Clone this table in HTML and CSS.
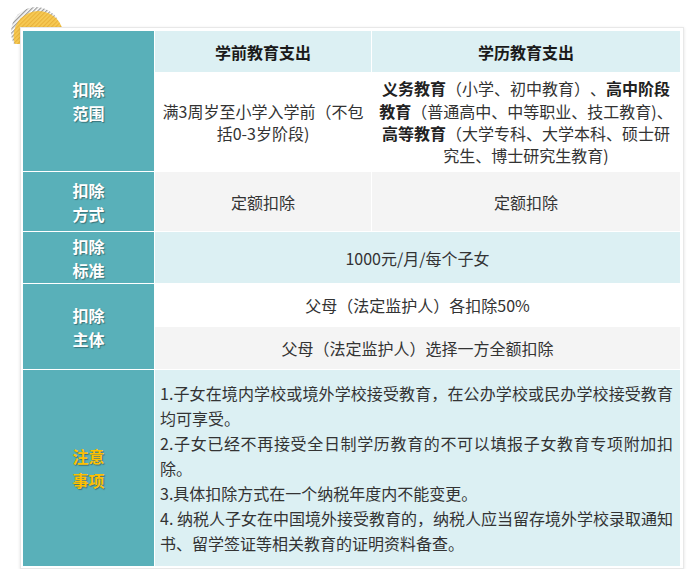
FILE: index.html
```html
<!DOCTYPE html>
<html lang="zh-CN">
<head>
<meta charset="utf-8">
<title>子女教育专项附加扣除</title>
<link rel="stylesheet" href="styles.css">
</head>
<body>
<div class="page">
  <svg class="deco" width="64" height="40" viewBox="0 0 64 40" aria-hidden="true">
    <defs>
      <pattern id="hatchGrey" width="3" height="3" patternUnits="userSpaceOnUse" patternTransform="rotate(45)">
        <rect width="3" height="3" fill="#ffffff"/>
        <rect width="1.3" height="3" fill="#9a9a9a"/>
      </pattern>
      <pattern id="hatchYellow" width="3" height="3" patternUnits="userSpaceOnUse" patternTransform="rotate(45)">
        <rect width="3" height="3" fill="#f7cb55"/>
        <rect width="1.2" height="3" fill="#e9b23c"/>
      </pattern>
    </defs>
    <circle cx="26" cy="28" r="25" fill="url(#hatchGrey)"/>
    <circle cx="28.5" cy="32" r="25" fill="url(#hatchYellow)"/>
  </svg>
  <div class="card">
    <table class="tax">
      <colgroup>
        <col class="c1"><col class="c2"><col class="c3">
      </colgroup>
      <tr class="r-head">
        <td class="label" rowspan="2">扣除<br>范围</td>
        <th class="head bd-r">学前教育支出</th>
        <th class="head">学历教育支出</th>
      </tr>
      <tr class="r-scope">
        <td class="white bd-r">满3周岁至小学入学前（不包括0-3岁阶段)</td>
        <td class="white"><b>义务教育</b>（小学、初中教育）、<b>高中阶段教育</b>（普通高中、中等职业、技工教育)、<b>高等教育</b>（大学专科、大学本科、硕士研究生、博士研究生教育)</td>
      </tr>
      <tr class="r-way">
        <td class="label">扣除<br>方式</td>
        <td class="grey bd-r">定额扣除</td>
        <td class="grey">定额扣除</td>
      </tr>
      <tr class="r-std">
        <td class="label">扣除<br>标准</td>
        <td class="cyan" colspan="2">1000元/月/每个子女</td>
      </tr>
      <tr class="r-sub">
        <td class="label" rowspan="2">扣除<br>主体</td>
        <td class="white" colspan="2">父母（法定监护人）各扣除50%</td>
      </tr>
      <tr class="r-sub">
        <td class="grey" colspan="2">父母（法定监护人）选择一方全额扣除</td>
      </tr>
      <tr class="r-note">
        <td class="label note-label">注意<br>事项</td>
        <td class="cyan notes" colspan="2">
          <p>1.子女在境内学校或境外学校接受教育，在公办学校或民办学校接受教育均可享受。</p>
          <p>2.子女已经不再接受全日制学历教育的不可以填报子女教育专项附加扣除。</p>
          <p>3.具体扣除方式在一个纳税年度内不能变更。</p>
          <p>4. 纳税人子女在中国境外接受教育的，纳税人应当留存境外学校录取通知书、留学签证等相关教育的证明资料备查。</p>
        </td>
      </tr>
    </table>
  </div>
</div>
</body>
</html>
```

FILE: styles.css
```css
* { box-sizing: border-box; }

html, body {
  margin: 0;
  padding: 0;
  background: #ffffff;
}

body {
  font-family: "Noto Sans CJK SC", "Microsoft YaHei", "Noto Sans", sans-serif;
  color: #333333;
  text-spacing-trim: space-all;
}

.page {
  position: relative;
  padding: 27px 10px 0 20px;
  width: 694px;
}

.deco {
  position: absolute;
  left: 10px;
  top: 4px;
}

.card {
  position: relative;
  width: 664px;
  background: #ffffff;
  border: 1px solid #e8e8e8;
  padding: 3px 3px 2px 2px;
  box-shadow: 0 1px 3px rgba(0, 0, 0, 0.12);
}

.tax {
  width: 657px;
  border-collapse: separate;
  border-spacing: 0;
  table-layout: fixed;
  font-size: 16px;
}

.c1 { width: 132px; }
.c2 { width: 217px; }
.c3 { width: 308px; }

.tax td, .tax th {
  border-bottom: 1px solid #ffffff;
  padding: 0 6px;
  text-align: center;
  vertical-align: middle;
}

.tax tr:last-child td { border-bottom: none; }

.bd-r { border-right: 1px solid #ffffff; }

.label {
  background: #59b0b9;
  color: #ffffff;
  font-weight: bold;
  line-height: 24px;
  border-right: 1px solid #ffffff;
  text-shadow: 1px 1px 1px rgba(0, 0, 0, 0.35);
}

.note-label { color: #ffc000; }

.head {
  background: #dcf0f3;
  color: #1a1a1a;
  font-weight: bold;
  font-size: 16px;
}

.white { background: #ffffff; }
.grey { background: #f4f4f4; }
.cyan { background: #dcf0f3; }

.r-head td, .r-head th { height: 42px; }
.r-scope td { height: 99px; line-height: 22.4px; }
.r-way td { height: 60px; }
.r-std td { height: 52px; }
.r-sub td { height: 43px; }
.r-note td { height: 196px; }

.r-scope b { color: #222222; }

.notes {
  text-align: left !important;
  padding: 10px 7px 10px 5px !important;
}

.notes p {
  margin: 0;
  line-height: 25px;
  text-align: justify;
}
```
